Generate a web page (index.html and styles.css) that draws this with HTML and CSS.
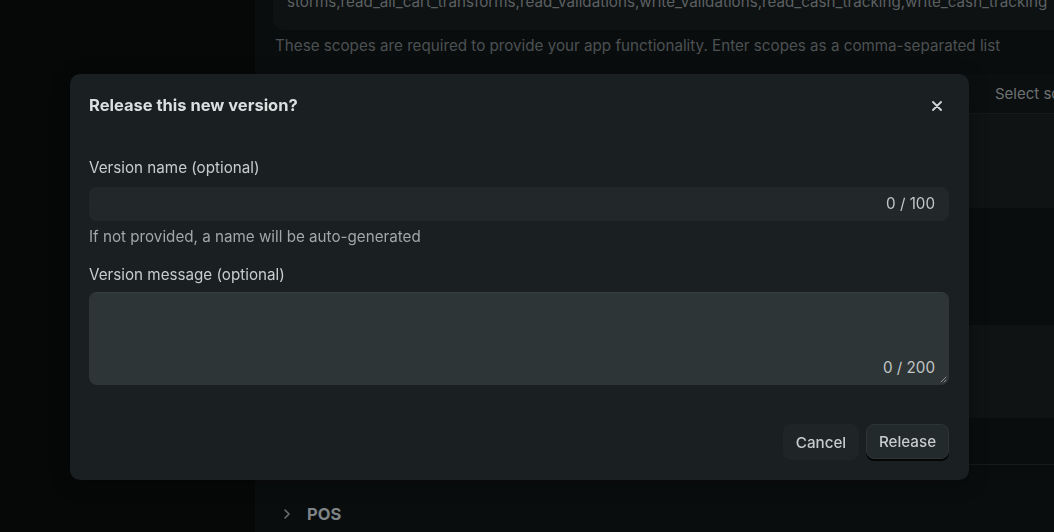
FILE: index.html
```html
<!DOCTYPE html>
<html lang="en">
<head>
<meta charset="utf-8">
<title>Release this new version?</title>
<link rel="stylesheet" href="styles.css">
</head>
<body>
<div class="page">
  <aside class="sidebar"></aside>
  <main class="main">
    <div class="scopes-box">storms,read_all_cart_transforms,read_validations,write_validations,read_cash_tracking,write_cash_tracking</div>
    <p class="scopes-help">These scopes are required to provide your app functionality. Enter scopes as a comma-separated list</p>
    <div class="table">
      <div class="row head"><span></span><span class="select">Select scopes</span></div>
      <div class="row band-a r1"></div>
      <div class="row band-b r2"></div>
      <div class="row band-a r3"></div>
      <div class="row band-b r4"></div>
    </div>
    <div class="section">
      <svg class="chev" width="8" height="12" viewBox="0 0 8 12"><path d="M2 2l4 4-4 4" fill="none" stroke="currentColor" stroke-width="1.6" stroke-linecap="round" stroke-linejoin="round"/></svg>
      <span>POS</span>
    </div>
  </main>
</div>

<div class="overlay">
  <div class="modal" role="dialog">
    <div class="modal-head">
      <h2 class="modal-title">Release this new version?</h2>
      <button class="close" aria-label="Close">
        <svg width="10" height="10" viewBox="0 0 10 10"><path d="M1 1l8 8M9 1l-8 8" stroke="currentColor" stroke-width="1.8" stroke-linecap="round"/></svg>
      </button>
    </div>
    <label class="field-label">Version name (optional)</label>
    <div class="input"><span class="count">0 / 100</span></div>
    <p class="hint">If not provided, a name will be auto-generated</p>
    <label class="field-label second">Version message (optional)</label>
    <div class="textarea">
      <span class="count">0 / 200</span>
      <svg class="grip" width="8" height="8" viewBox="0 0 8 8"><path d="M7 2L2 7M7 5L5 7" stroke="#8a8f91" stroke-width="1" stroke-linecap="round"/></svg>
    </div>
    <div class="actions">
      <button class="btn cancel">Cancel</button>
      <button class="btn release">Release</button>
    </div>
  </div>
</div>
</body>
</html>
```

FILE: styles.css
```css
* { box-sizing: border-box; }
html, body {
  margin: 0;
  padding: 0;
  width: 1054px;
  height: 532px;
  overflow: hidden;
  background: #060808;
  font-family: Inter, "Liberation Sans", sans-serif;
}
.page {
  display: flex;
  height: 532px;
}
.sidebar {
  width: 255px;
  flex: none;
  background: #060808;
}
.main {
  flex: 1;
  background: #0a0d0e;
  padding-left: 18px;
  overflow: hidden;
}
.scopes-box {
  margin-top: -14px;
  height: 44px;
  padding: 6px 14px 0;
  background: #0f1213;
  border-radius: 0 0 0 10px;
  color: #5b6062;
  font-size: 15.2px;
  line-height: 20px;
  white-space: nowrap;
  overflow: hidden;
}
.scopes-help {
  margin: 6px 0 0 2px;
  font-size: 15.2px;
  line-height: 20px;
  color: #4c5153;
  white-space: nowrap;
}
.table {
  margin-top: 18px;
}
.row {
  display: grid;
  grid-template-columns: 708px 1fr;
}
.row.head {
  height: 40px;
  align-items: center;
  background: #0c0f10;
  border-bottom: 1px solid #15191a;
}
.select {
  padding-left: 14px;
  color: #6c7173;
  font-size: 15px;
  white-space: nowrap;
}
.band-a { background: #0f1314; }
.band-b { background: #0a0d0e; }
.r1 { height: 94px; }
.r2 { height: 117px; }
.r3 { height: 93px; }
.r4 { height: 47px; border-bottom: 1px solid #151a1b; }
.section {
  display: flex;
  align-items: center;
  gap: 16px;
  margin-top: 39px;
  padding-left: 10px;
  color: #6a6f71;
}
.section span {
  color: #7f8486;
  font-weight: 700;
  font-size: 16.5px;
  line-height: 20px;
}
.overlay {
  position: fixed;
  inset: 0;
}
.modal {
  position: absolute;
  left: 70px;
  top: 74px;
  width: 899px;
  height: 406px;
  background: #1a1f21;
  border-radius: 10px;
  padding: 21px 20px 20px 19px;
  display: flex;
  flex-direction: column;
  box-shadow: 0 4px 20px rgba(0,0,0,0.3);
}
.modal-head {
  display: flex;
  align-items: center;
  justify-content: space-between;
  height: 20px;
}
.modal-title {
  margin: 0;
  font-size: 16.5px;
  font-weight: 700;
  line-height: 20px;
  color: #dcdfe0;
}
.close {
  background: none;
  border: 0;
  padding: 0;
  margin-right: 7px;
  margin-top: 2px;
  color: #d4d7d8;
  display: flex;
  align-items: center;
  justify-content: center;
  width: 10px;
  height: 10px;
}
.field-label {
  margin-top: 43px;
  font-size: 15.2px;
  line-height: 20px;
  color: #c9cccd;
}
.field-label.second {
  margin-top: 18px;
}
.input {
  margin-top: 9px;
  height: 34px;
  background: #222829;
  border-radius: 8px;
  display: flex;
  align-items: center;
  justify-content: flex-end;
  padding-right: 14px;
}
.count {
  font-size: 15.2px;
  line-height: 20px;
  color: #c2c6c7;
}
.hint {
  margin: 6px 0 0;
  font-size: 15.2px;
  line-height: 20px;
  color: #a2a6a8;
}
.textarea {
  position: relative;
  margin-top: 7px;
  height: 93px;
  background: #2e3537;
  border-top: 1px solid #363e40;
  border-radius: 8px;
  display: flex;
  align-items: flex-end;
  justify-content: flex-end;
  padding: 0 14px 7px 0;
}
.grip {
  position: absolute;
  right: 2px;
  bottom: 2px;
}
.actions {
  margin-top: auto;
  display: flex;
  justify-content: flex-end;
  align-items: center;
  gap: 7px;
}
.btn {
  font-family: Inter, "Liberation Sans", sans-serif;
  font-size: 15.2px;
  font-weight: 500;
  color: #c7cbcc;
  border-radius: 8px;
  cursor: pointer;
  padding: 0;
}
.cancel {
  width: 76px;
  height: 36px;
  margin-top: 2px;
  background: #1f2527;
  border: 0;
}
.release {
  width: 83px;
  height: 35px;
  background: #232a2b;
  border: 1px solid #2d3436;
  box-shadow: 0 2px 0 #040606;
}
```
